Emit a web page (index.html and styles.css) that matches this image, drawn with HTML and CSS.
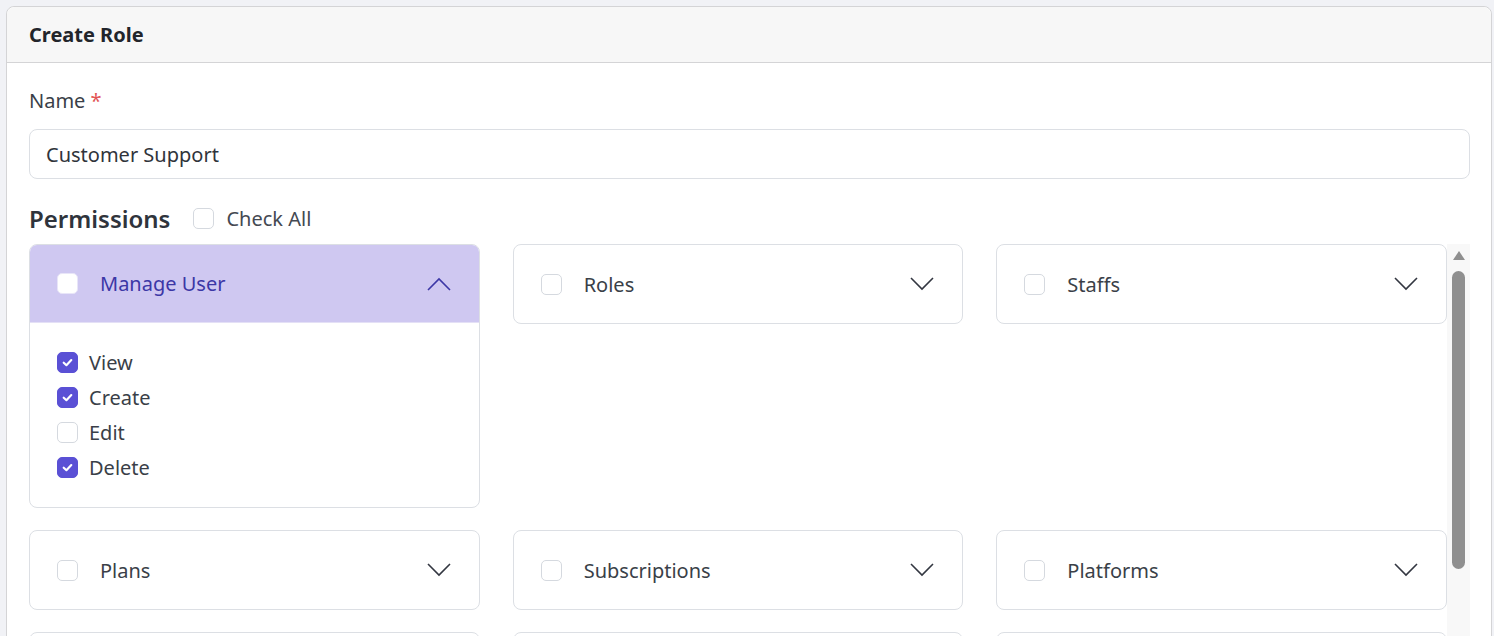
FILE: index.html
```html
<!DOCTYPE html>
<html lang="en">
<head>
    <meta charset="UTF-8">
    <meta name="viewport" content="width=device-width, initial-scale=1.0">
    <title>Create Role</title>
    <link rel="stylesheet" href="styles.css">
</head>
<body>
    <div class="card">
        <div class="card-header">Create Role</div>

        <div class="card-body">
            <div class="field">
                <label class="field-label">Name <span class="required">*</span></label>
                <div class="input">Customer Support</div>
            </div>

            <div class="perm-head">
                <h2>Permissions</h2>
                <label class="check-all"><span class="box"></span>Check All</label>
            </div>

            <div class="perm-scroll">
                <div class="perm-grid">
                    <div class="acc open">
                        <div class="acc-head">
                            <span class="box"></span>
                            <span class="acc-title">Manage User</span>
                            <svg class="chev" viewBox="0 0 24 14"><path d="M1 13 L12 2 L23 13"/></svg>
                        </div>
                        <div class="acc-body">
                            <label class="perm"><span class="box checked"><svg viewBox="0 0 12 12"><path d="M2.5 6.2 L5 8.5 L9.5 3.8"/></svg></span>View</label>
                            <label class="perm"><span class="box checked"><svg viewBox="0 0 12 12"><path d="M2.5 6.2 L5 8.5 L9.5 3.8"/></svg></span>Create</label>
                            <label class="perm"><span class="box"></span>Edit</label>
                            <label class="perm"><span class="box checked"><svg viewBox="0 0 12 12"><path d="M2.5 6.2 L5 8.5 L9.5 3.8"/></svg></span>Delete</label>
                        </div>
                    </div>

                    <div class="acc">
                        <div class="acc-head">
                            <span class="box"></span>
                            <span class="acc-title">Roles</span>
                            <svg class="chev" viewBox="0 0 24 14"><path d="M1 1 L12 12 L23 1"/></svg>
                        </div>
                    </div>

                    <div class="acc">
                        <div class="acc-head">
                            <span class="box"></span>
                            <span class="acc-title">Staffs</span>
                            <svg class="chev" viewBox="0 0 24 14"><path d="M1 1 L12 12 L23 1"/></svg>
                        </div>
                    </div>

                    <div class="acc">
                        <div class="acc-head">
                            <span class="box"></span>
                            <span class="acc-title">Plans</span>
                            <svg class="chev" viewBox="0 0 24 14"><path d="M1 1 L12 12 L23 1"/></svg>
                        </div>
                    </div>

                    <div class="acc">
                        <div class="acc-head">
                            <span class="box"></span>
                            <span class="acc-title">Subscriptions</span>
                            <svg class="chev" viewBox="0 0 24 14"><path d="M1 1 L12 12 L23 1"/></svg>
                        </div>
                    </div>

                    <div class="acc">
                        <div class="acc-head">
                            <span class="box"></span>
                            <span class="acc-title">Platforms</span>
                            <svg class="chev" viewBox="0 0 24 14"><path d="M1 1 L12 12 L23 1"/></svg>
                        </div>
                    </div>

                    <!-- next row, scrolled out of view -->
                    <div class="acc"><div class="acc-head"></div></div>
                    <div class="acc"><div class="acc-head"></div></div>
                    <div class="acc"><div class="acc-head"></div></div>
                </div>

                <div class="scrollbar">
                    <span class="arrow-up"></span>
                    <span class="thumb"></span>
                </div>
            </div>
        </div>
    </div>
</body>
</html>
```

FILE: styles.css
```css
* {
    box-sizing: border-box;
    margin: 0;
    padding: 0;
}

body {
    font-family: 'Noto Sans', 'Open Sans', sans-serif;
    background: #f1f2f6;
    color: #373c45;
    padding: 6px 2px 0 6px;
    height: 636px;
    overflow: hidden;
}

.card {
    background: white;
    border: 1px solid #d4d4d6;
    border-radius: 8px;
    min-height: 700px;
}

.card-header {
    height: 56px;
    display: flex;
    align-items: center;
    padding: 0 22px;
    background: #f7f7f7;
    border-bottom: 1px solid #d4d4d6;
    border-radius: 8px 8px 0 0;
    font-size: 20px;
    font-weight: 700;
    color: #22252b;
}

.card-body {
    padding: 24px 21px 0 22px;
}

.field-label {
    display: block;
    font-size: 20px;
    line-height: 28px;
    color: #3a3f48;
}

.required {
    color: #e25555;
}

.input {
    margin-top: 14px;
    height: 50px;
    border: 1px solid #dcdfe4;
    border-radius: 8px;
    padding: 0 16px;
    display: flex;
    align-items: center;
    font-size: 20px;
    color: #30343b;
}

.perm-head {
    display: flex;
    align-items: center;
    gap: 23px;
    height: 38px;
    margin-top: 20px;
    margin-bottom: 7px;
}

.perm-head h2 {
    font-size: 24px;
    font-weight: 600;
    color: #2f343c;
}

.check-all {
    display: flex;
    align-items: center;
    gap: 12px;
    font-size: 20px;
    color: #444952;
}

.box {
    width: 21px;
    height: 21px;
    flex: none;
    border: 1px solid #d5d9df;
    border-radius: 5px;
    background: white;
    display: flex;
    align-items: center;
    justify-content: center;
}

.box.checked {
    background: #5a50d5;
    border-color: #5a50d5;
}

.box svg {
    width: 13px;
    height: 13px;
    fill: none;
    stroke: white;
    stroke-width: 2;
    stroke-linecap: round;
    stroke-linejoin: round;
}

.perm-scroll {
    display: flex;
    height: 400px;
}

.perm-grid {
    flex: 1;
    display: grid;
    grid-template-columns: repeat(3, 1fr);
    grid-auto-rows: max-content;
    align-content: start;
    gap: 22px 33px;
    align-items: start;
    overflow: hidden;
}

.acc {
    border: 1px solid #dcdfe4;
    border-radius: 8px;
}

.acc-head {
    height: 78px;
    display: flex;
    align-items: center;
    padding: 0 28px 0 27px;
    border-radius: 7px 7px 0 0;
}

.acc-title {
    flex: 1;
    margin-left: 22px;
    font-size: 20px;
    color: #3a3f48;
}

.chev {
    width: 24px;
    height: 14px;
    fill: none;
    stroke: #333741;
    stroke-width: 1.6;
}

.acc.open .acc-head {
    background: #cfc8f1;
    border-bottom: 1px solid #e4e0f6;
}

.acc.open .acc-title {
    color: #3c37a6;
}

.acc.open .acc-head .box {
    border-color: #e8e5f8;
}

.acc.open .chev {
    stroke: #3c37a6;
}

.acc-body {
    padding: 22px 27px 22px;
    display: flex;
    flex-direction: column;
}

.perm {
    height: 35px;
    display: flex;
    align-items: center;
    gap: 11px;
    font-size: 20px;
    color: #3a3f48;
}

.scrollbar {
    width: 23px;
    flex: none;
    background: #f8f8f8;
    display: flex;
    flex-direction: column;
    align-items: center;
    padding-top: 7px;
}

.arrow-up {
    width: 0;
    height: 0;
    border-left: 6px solid transparent;
    border-right: 6px solid transparent;
    border-bottom: 9px solid #8f8f8f;
}

.thumb {
    margin-top: 11px;
    width: 13px;
    height: 298px;
    border-radius: 7px;
    background: #8f8f8f;
}
```
